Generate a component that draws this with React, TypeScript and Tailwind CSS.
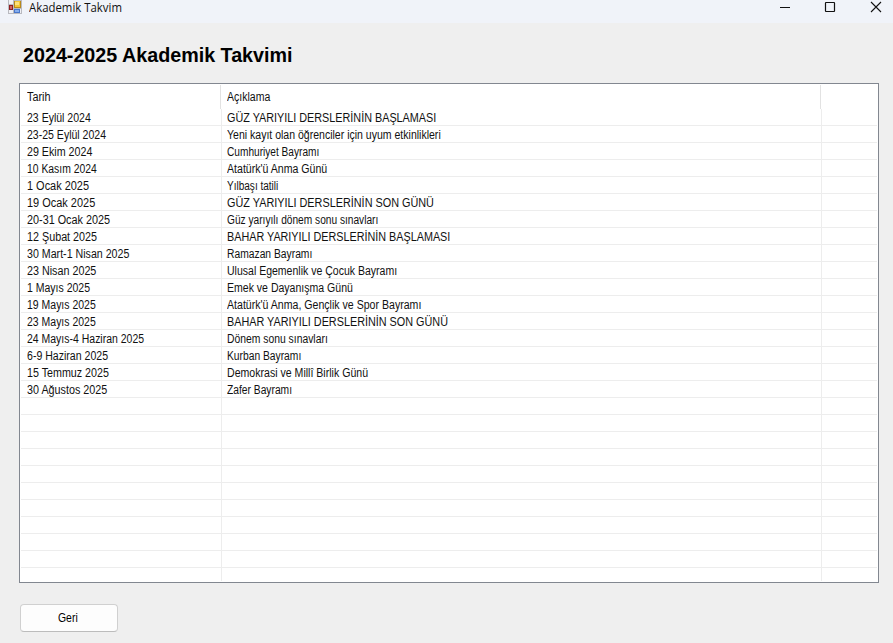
import { useLayoutEffect, useRef, useState } from "react";

type Entry = { date: string; dateWidth: number; text: string; textWidth: number };

const entries: Entry[] = [
  { date: "23 Eylül 2024", dateWidth: 64, text: "GÜZ YARIYILI DERSLERİNİN BAŞLAMASI", textWidth: 209 },
  { date: "23-25 Eylül 2024", dateWidth: 79, text: "Yeni kayıt olan öğrenciler için uyum etkinlikleri", textWidth: 214 },
  { date: "29 Ekim 2024", dateWidth: 65, text: "Cumhuriyet Bayramı", textWidth: 92 },
  { date: "10 Kasım 2024", dateWidth: 70, text: "Atatürk'ü Anma Günü", textWidth: 100.5 },
  { date: "1 Ocak 2025", dateWidth: 62, text: "Yılbaşı tatili", textWidth: 51 },
  { date: "19 Ocak 2025", dateWidth: 68.5, text: "GÜZ YARIYILI DERSLERİNİN SON GÜNÜ", textWidth: 207 },
  { date: "20-31 Ocak 2025", dateWidth: 83, text: "Güz yarıyılı dönem sonu sınavları", textWidth: 151.5 },
  { date: "12 Şubat 2025", dateWidth: 70, text: "BAHAR YARIYILI DERSLERİNİN BAŞLAMASI", textWidth: 223 },
  { date: "30 Mart-1 Nisan 2025", dateWidth: 102, text: "Ramazan Bayramı", textWidth: 85 },
  { date: "23 Nisan 2025", dateWidth: 69, text: "Ulusal Egemenlik ve Çocuk Bayramı", textWidth: 170 },
  { date: "1 Mayıs 2025", dateWidth: 63, text: "Emek ve Dayanışma Günü", textWidth: 125.5 },
  { date: "19 Mayıs 2025", dateWidth: 69, text: "Atatürk'ü Anma, Gençlik ve Spor Bayramı", textWidth: 194 },
  { date: "23 Mayıs 2025", dateWidth: 69, text: "BAHAR YARIYILI DERSLERİNİN SON GÜNÜ", textWidth: 221 },
  { date: "24 Mayıs-4 Haziran 2025", dateWidth: 117, text: "Dönem sonu sınavları", textWidth: 101 },
  { date: "6-9 Haziran 2025", dateWidth: 81, text: "Kurban Bayramı", textWidth: 74.5 },
  { date: "15 Temmuz 2025", dateWidth: 82, text: "Demokrasi ve Millî Birlik Günü", textWidth: 141 },
  { date: "30 Ağustos 2025", dateWidth: 80, text: "Zafer Bayramı", textWidth: 65 },
];

const emptyRows = Array.from({ length: 10 }, (_, i) => i);

/* Condenses a label horizontally to the given width. */
function Label({ width, children }: { width: number; children: string }) {
  const ref = useRef<HTMLSpanElement>(null);
  const [scale, setScale] = useState(1);
  useLayoutEffect(() => {
    if (ref.current) setScale(width / ref.current.offsetWidth);
  }, [width]);
  return (
    <span ref={ref} className="inline-block origin-left whitespace-nowrap" style={{ transform: `scaleX(${scale})` }}>
      {children}
    </span>
  );
}

function AppIcon() {
  return (
    <svg width="14" height="14" viewBox="0 0 14 14" shapeRendering="crispEdges">
      <rect x="0" y="0" width="14" height="14" fill="#b9bac0" />
      <rect x="1" y="0" width="4" height="4" fill="#f0f0f4" />
      <rect x="1" y="10" width="4" height="3" fill="#f0f0f4" />
      <rect x="12" y="9" width="1" height="4" fill="#f0f0f4" />
      <rect x="1" y="5" width="4" height="5" fill="#8e1e22" />
      <rect x="2" y="6" width="2" height="3" fill="#d0605c" />
      <rect x="6" y="1" width="7" height="7" fill="#b88a1c" />
      <rect x="7" y="1" width="5" height="6" fill="#f2c534" />
      <rect x="7" y="2" width="4" height="3" fill="#fbe07c" />
      <rect x="6" y="9" width="6" height="4" fill="#4a78cc" />
      <rect x="7" y="10" width="4" height="2" fill="#86aeee" />
    </svg>
  );
}

export default function App() {
  return (
    <div className="flex h-[643px] w-[893px] flex-col overflow-hidden bg-[#efefef] font-['Liberation_Sans',Arial,sans-serif] text-[12px] text-[#111]">
      <header className="flex h-[23px] shrink-0 items-start justify-between bg-[#f0f3f9]">
        <div className="flex pl-2">
          <AppIcon />
          <div className="ml-[7px] h-4 font-['Open_Sans','Noto_Sans',sans-serif] text-[12px] leading-4">
            <Label width={93}>Akademik Takvim</Label>
          </div>
        </div>
        <svg width="113" height="15" viewBox="780 0 113 15" fill="none" stroke="#111">
          <path d="M780 7.5h10" />
          <rect x="825.5" y="2.5" width="9" height="9" rx="0.5" strokeWidth="1.2" />
          <path d="M871 2l10 10M881 2l-10 10" strokeWidth="1.1" />
        </svg>
      </header>

      <h1 className="mt-5 ml-[23px] h-[25px] shrink-0 text-[20px] leading-[25px] font-bold text-black">
        <Label width={270}>2024-2025 Akademik Takvimi</Label>
      </h1>

      <main className="mt-[15px] ml-[19px] h-[500px] w-[860px] shrink-0 border border-[#828790] bg-white px-px pb-px">
        <div className="flex h-[25px] pt-px leading-6">
          <div className="w-[200px] border-r border-[#e2e2e2] pl-[6px]">
            <Label width={23.5}>Tarih</Label>
          </div>
          <div className="w-[600px] border-r border-[#e2e2e2] pl-[6px]">
            <Label width={43}>Açıklama</Label>
          </div>
        </div>
        {entries.map((e) => (
          <div key={e.date} className="flex h-[17px] border-b border-[#ededed] leading-[19px]">
            <div className="w-[201px] border-r border-[#ededed] pl-[6px]">
              <Label width={e.dateWidth}>{e.date}</Label>
            </div>
            <div className="w-[600px] border-r border-[#ededed] pl-[5px]">
              <Label width={e.textWidth}>{e.text}</Label>
            </div>
          </div>
        ))}
        {emptyRows.map((i) => (
          <div key={i} className="flex h-[17px] border-b border-[#ededed]">
            <div className="w-[201px] border-r border-[#ededed]" />
            <div className="w-[600px] border-r border-[#ededed]" />
          </div>
        ))}
        <div className="flex h-[13px]">
          <div className="w-[201px] border-r border-[#ededed]" />
          <div className="w-[600px] border-r border-[#ededed]" />
        </div>
      </main>

      <button className="mt-[21px] ml-5 flex h-7 w-[98px] shrink-0 items-center rounded border border-[#d0d0d0] border-b-[#bcbcbc] bg-[#fdfdfd] pl-[37px] text-black">
        <Label width={20}>Geri</Label>
      </button>
    </div>
  );
}
